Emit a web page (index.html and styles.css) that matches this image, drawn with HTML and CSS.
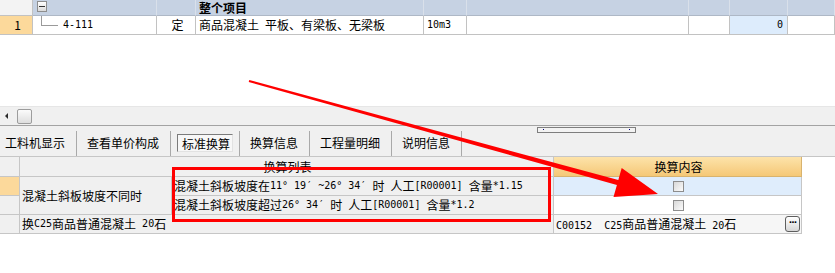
FILE: index.html
```html
<!DOCTYPE html>
<html lang="zh-CN">
<head>
    <meta charset="UTF-8">
    <title>标准换算</title>
    <link rel="stylesheet" href="styles.css">
</head>
<body>

<div id="app">
    <div class="grid top-grid">
        <div class="cell corner"></div>
        <div class="cell head tree"><span class="fold"></span></div>
        <div class="cell head"></div>
        <div class="cell head title">整个项目</div>
        <div class="cell head"></div>
        <div class="cell head"></div>
        <div class="cell head"></div>
        <div class="cell head"></div>
        <div class="cell head"></div>

        <div class="cell num sel">1</div>
        <div class="cell tree"><span class="branch"></span><span class="en">4-111</span></div>
        <div class="cell center">定</div>
        <div class="cell">商品混凝土<span class="en"> </span>平板、有梁板、无梁板</div>
        <div class="cell"><span class="en">10m3</span></div>
        <div class="cell"></div>
        <div class="cell"></div>
        <div class="cell qty"><span class="en">0</span></div>
        <div class="cell"></div>
    </div>

    <div class="spacer"></div>

    <div class="hscroll">
        <span class="arrow-left"></span>
        <span class="thumb"></span>
    </div>

    <div class="toolbar">
        <span class="tab first">工料机显示</span>
        <span class="sep"></span>
        <span class="tab">查看单价构成</span>
        <span class="sep"></span>
        <span class="tab active">标准换算</span>
        <span class="sep"></span>
        <span class="tab">换算信息</span>
        <span class="sep"></span>
        <span class="tab">工程量明细</span>
        <span class="sep"></span>
        <span class="tab">说明信息</span>
        <span class="sep"></span>
        <span class="grip"><i></i><i></i></span>
    </div>

    <div class="grid bottom-grid">
        <div class="cell"></div>
        <div class="cell span2 center">换算列表</div>
        <div class="cell orange center">换算内容</div>

        <div class="cell sel"></div>
        <div class="cell label">混凝土斜板坡度不同时</div>
        <div class="cell">混凝土斜板坡度在<span class="en">11° 19′ ~26° 34′ </span>时<span class="en"> </span>人工<span class="en">[R00001] </span>含量<span class="en">*1.15</span></div>
        <div class="cell check-cell picked"><span class="check"></span></div>

        <div class="cell"></div>
        <div class="cell">混凝土斜板坡度超过<span class="en">26° 34′ </span>时<span class="en"> </span>人工<span class="en">[R00001] </span>含量<span class="en">*1.2</span></div>
        <div class="cell check-cell plain"><span class="check"></span></div>

        <div class="cell"></div>
        <div class="cell span2">换<span class="en">C25</span>商品普通混凝土<span class="en"> 20</span>石</div>
        <div class="cell content">
            <span><span class="en">C00152  C25</span>商品普通混凝土<span class="en"> 20</span>石</span>
            <span class="more">···</span>
        </div>
    </div>

    <div class="red-box"></div>

    <svg class="arrow" width="835" height="273" viewBox="0 0 835 273">
        <polygon points="249.3,80 618.3,180.1 621.7,168 658,194 613.5,196.9 616.9,184.9 248.7,82" fill="#ff0000"/>
    </svg>
</div>

</body>
</html>
```

FILE: styles.css
```css
body {
    margin: 0;
    background-color: #ffffff;
    color: #000000;
    font-family: "Noto Sans CJK SC", sans-serif;
    font-size: 12px;
}

#app {
    position: relative;
    width: 835px;
    height: 273px;
    overflow: hidden;
}

.en {
    font-family: "DejaVu Sans Mono", monospace;
    font-size: 10px;
    white-space: pre;
}

.grid {
    display: grid;
}

.cell {
    box-sizing: border-box;
    display: flex;
    align-items: center;
    white-space: nowrap;
    overflow: hidden;
    border-right: 1px solid #c2c2c2;
    border-bottom: 1px solid #c2c2c2;
    line-height: 1;
}

.center {
    justify-content: center;
}

/* top grid */
.top-grid {
    grid-template-columns: 33px 124px 39px 228px 43px 222px 41px 58px 1fr;
    grid-template-rows: 16px 19px;
}

.top-grid .cell {
    padding-left: 3px;
}

.corner {
    background-color: #f3f3f3;
}

.head {
    background-color: #c6d2e3;
    border-right-color: #d9e0ea;
    border-bottom-color: #aeb8c6;
}

.title {
    font-weight: bold;
}

.tree {
    align-items: flex-start;
}

.head.tree {
    padding-left: 4px;
}

.fold {
    position: relative;
    box-sizing: border-box;
    width: 10px;
    height: 11px;
    margin-top: 1px;
    border: 1px solid #8e8e8e;
    background: linear-gradient(#ffffff, #dadada);
}

.fold::after {
    content: "";
    position: absolute;
    left: 1px;
    top: 4px;
    width: 6px;
    height: 1px;
    background-color: #333;
}

.top-grid .tree:not(.head) {
    padding-left: 8px;
}

.branch {
    width: 16px;
    height: 9px;
    border-left: 1px solid #9a9a9a;
    border-bottom: 1px solid #9a9a9a;
    margin-right: 5px;
}

.tree .en {
    align-self: center;
}

.num {
    justify-content: center;
    padding-left: 0;
}

.sel {
    background-color: #fcd99b;
}

.qty {
    justify-content: flex-end;
    padding-right: 4px;
    background-color: #ddecfc;
}

.spacer {
    height: 71px;
}

/* scrollbar */
.hscroll {
    display: flex;
    align-items: center;
    height: 19px;
    background-color: #f0f0f0;
    border-top: 1px solid #e6e6e6;
    box-sizing: border-box;
}

.arrow-left {
    width: 0;
    height: 0;
    margin-left: 5px;
    border-top: 3px solid transparent;
    border-bottom: 3px solid transparent;
    border-right: 3px solid #2a2a2a;
}

.thumb {
    box-sizing: border-box;
    width: 15px;
    height: 15px;
    margin-left: 9px;
    border: 1px solid #9c9c9c;
    border-radius: 2px;
    background: linear-gradient(#fbfbfb, #dedede);
}

/* toolbar */
.toolbar {
    position: relative;
    display: flex;
    align-items: center;
    box-sizing: border-box;
    height: 32px;
    padding-top: 4px;
    background-color: #f0f0f0;
    border-top: 1px solid #a3a3a3;
    border-bottom: 1px solid #c6c6c6;
}

.tab {
    padding: 0 11px 0 10px;
    line-height: 16px;
    white-space: nowrap;
}

.tab.first {
    padding-left: 5px;
}

.tab.active {
    margin: 0 6px;
    padding: 0 2px 0 4px;
    height: 18px;
    line-height: 17px;
    box-sizing: border-box;
    border: 1px solid;
    border-color: #7b7b7b #e2e2e2 #e2e2e2 #7b7b7b;
    background-color: #f7f7f7;
}

.sep {
    width: 1px;
    height: 25px;
    background-color: #a9a9a9;
}

.grip {
    position: absolute;
    left: 537px;
    top: 1px;
    box-sizing: border-box;
    width: 99px;
    height: 6px;
    border: 1px solid #7e7e7e;
    background-color: #f3f3f3;
}

.grip i {
    position: absolute;
    top: 1px;
    left: 5px;
    width: 1px;
    height: 1px;
    background-color: #000080;
}

.grip i + i {
    left: 91px;
}

/* bottom grid */
.bottom-grid {
    width: 802px;
    grid-template-columns: 20px 152px 382px 248px;
    grid-template-rows: 20px 19px 19px 19px;
}

.bottom-grid .cell {
    background-color: #f0f0f0;
    padding-left: 2px;
    border-color: #c6c6c6;
}

.bottom-grid .cell.sel {
    background-color: #fcd99b;
}

.span2 {
    grid-column: span 2;
}

.label {
    grid-row: span 2;
}

.bottom-grid .orange {
    background: linear-gradient(#fde3aa, #f5c877);
    border-color: #d8b36e;
}

.check-cell {
    justify-content: center;
}

.bottom-grid .picked {
    background-color: #dfedfc;
}

.bottom-grid .plain {
    background-color: #ffffff;
}

.check {
    box-sizing: border-box;
    width: 11px;
    height: 11px;
    border: 1px solid #8d8d8d;
    background: linear-gradient(135deg, #d8d8d8, #fbfbfb);
}

.bottom-grid .content {
    justify-content: space-between;
    padding-right: 1px;
    background-color: #f6f6f6;
}

.more {
    box-sizing: border-box;
    width: 15px;
    height: 16px;
    border: 1px solid #5e5e5e;
    border-radius: 3px;
    background: linear-gradient(#ffffff, #d6d6d6);
    font-family: "DejaVu Sans", sans-serif;
    font-size: 9px;
    font-weight: bold;
    line-height: 10px;
    text-align: center;
    letter-spacing: -1px;
}

/* overlays */
.red-box {
    position: absolute;
    left: 172px;
    top: 167px;
    width: 379px;
    height: 55px;
    box-sizing: border-box;
    border: 3px solid #ff0000;
}

.arrow {
    position: absolute;
    left: 0;
    top: 0;
    pointer-events: none;
}
```
